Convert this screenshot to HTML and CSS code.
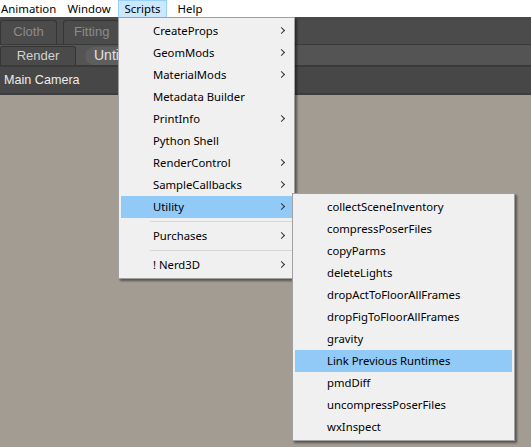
FILE: index.html
```html
<!DOCTYPE html>
<html lang="en">
<head>
  <meta charset="UTF-8" />
  <title>Scripts menu</title>
  <link rel="stylesheet" href="styles.css">
</head>
<body>
  <div class="menubar">
    <span class="mb-item w-anim">Animation</span>
    <span class="mb-item w-win">Window</span>
    <span class="mb-item w-scr active">Scripts</span>
    <span class="mb-item w-help">Help</span>
  </div>

  <div class="toolbar">
    <div class="row row-rooms">
      <span class="tab dim">Cloth</span>
      <span class="tab dim">Fitting</span>
    </div>
    <div class="row row-docs">
      <span class="tab lit">Render</span>
      <span class="pill">Untitled</span>
    </div>
    <div class="row row-camera">
      <span class="cam">Main Camera</span>
    </div>
  </div>

  <div class="viewport"></div>

  <!-- Scripts dropdown -->
  <div class="menu main-menu">
    <div class="item sub">CreateProps</div>
    <div class="item sub">GeomMods</div>
    <div class="item sub">MaterialMods</div>
    <div class="item">Metadata Builder</div>
    <div class="item sub">PrintInfo</div>
    <div class="item">Python Shell</div>
    <div class="item sub">RenderControl</div>
    <div class="item sub">SampleCallbacks</div>
    <div class="item sub hot">Utility</div>
    <div class="sep"></div>
    <div class="item sub">Purchases</div>
    <div class="sep"></div>
    <div class="item sub">! Nerd3D</div>
  </div>

  <!-- Utility submenu -->
  <div class="menu sub-menu">
    <div class="item">collectSceneInventory</div>
    <div class="item">compressPoserFiles</div>
    <div class="item">copyParms</div>
    <div class="item">deleteLights</div>
    <div class="item">dropActToFloorAllFrames</div>
    <div class="item">dropFigToFloorAllFrames</div>
    <div class="item">gravity</div>
    <div class="item hot">Link Previous Runtimes</div>
    <div class="item">pmdDiff</div>
    <div class="item">uncompressPoserFiles</div>
    <div class="item">wxInspect</div>
  </div>
</body>
</html>
```

FILE: styles.css
```css
body {
  margin: 0;
  width: 531px;
  height: 447px;
  overflow: hidden;
  background: #a29c92;
  font-family: 'Noto Sans', sans-serif;
  position: relative;
}

/* top menu bar */
.menubar {
  display: flex;
  height: 17px;
  background: #fff;
  font-size: 11.4px;
  color: #000;
}
.mb-item {
  box-sizing: border-box;
  text-align: center;
  border: 1px solid transparent;
  border-bottom: 0;
  line-height: 16px;
}
.w-anim { width: 60px; text-align: left; }
.w-win { width: 58px; }
.w-scr { width: 49px; }
.w-help { width: 46px; }
.mb-item.active {
  background: #cce8ff;
  border-color: #99d1ff;
}

/* dark app toolbar */
.toolbar {
  background: #4a4a4a;
  font-family: 'Liberation Sans', Arial, sans-serif;
  font-size: 13px;
}
.row {
  display: flex;
  align-items: flex-end;
  gap: 6px;
}
.row-rooms {
  box-sizing: border-box;
  height: 28px;
  border-top: 3px solid #484848;
  background: #4b4b4b;
  border-bottom: 1px solid #3a3a3a;
}
.tab {
  box-sizing: border-box;
  border: 1px solid #353535;
  border-bottom: 0;
  border-radius: 3px 3px 0 0;
  padding: 0 10px;
  text-align: center;
}
.row-rooms .tab {
  height: 24px;
  line-height: 22px;
  width: 57px;
}
.dim { color: #8c8c8c; }
.lit { color: #d2d2d2; }
.row-docs {
  height: 20px;
  background: #545454;
  border-bottom: 2px solid #3a3a3a;
  gap: 9px;
}
.row-docs .tab {
  width: 76px;
  height: 19px;
  line-height: 18px;
  background: #4a4a4a;
}
.pill {
  height: 18px;
  line-height: 16px;
  padding-left: 9px;
  border-radius: 9px 0 0 9px;
  background: #5e5e5e;
  color: #e4e4e4;
  font-size: 14px;
}
.row-camera {
  height: 26px;
  align-items: center;
  background: #474747;
  border-bottom: 2px solid #3c3c3c;
}
.cam {
  color: #ececec;
  padding-left: 4px;
  font-size: 12.6px;
}

.viewport {
  height: 360px;
  background: #a29c92;
}

/* dropdown menus */
.menu {
  position: absolute;
  box-sizing: border-box;
  background: #f0f0f0;
  border: 1px solid #a0a0a0;
  padding: 2px 0;
  box-shadow: 2px 2px 2px rgba(0, 0, 0, 0.45);
  font-size: 11.3px;
  color: #000;
}
.main-menu {
  left: 118px;
  top: 17px;
  width: 177px;
}
.sub-menu {
  left: 292px;
  top: 193px;
  width: 223px;
}
.item {
  height: 22px;
  line-height: 22px;
  margin: 0 2px;
  padding-left: 32px;
  position: relative;
}
.item.hot {
  background: #91c9f7;
}
.item.sub::after {
  content: "";
  position: absolute;
  right: 8px;
  top: 8px;
  width: 4px;
  height: 4px;
  border-right: 1px solid #333;
  border-top: 1px solid #333;
  transform: rotate(45deg);
}
.sep {
  height: 7px;
  margin-left: 31px;
  position: relative;
}
.sep::before {
  content: "";
  position: absolute;
  left: 0;
  right: 0;
  top: 3px;
  border-top: 1px solid #d7d7d7;
}
```
